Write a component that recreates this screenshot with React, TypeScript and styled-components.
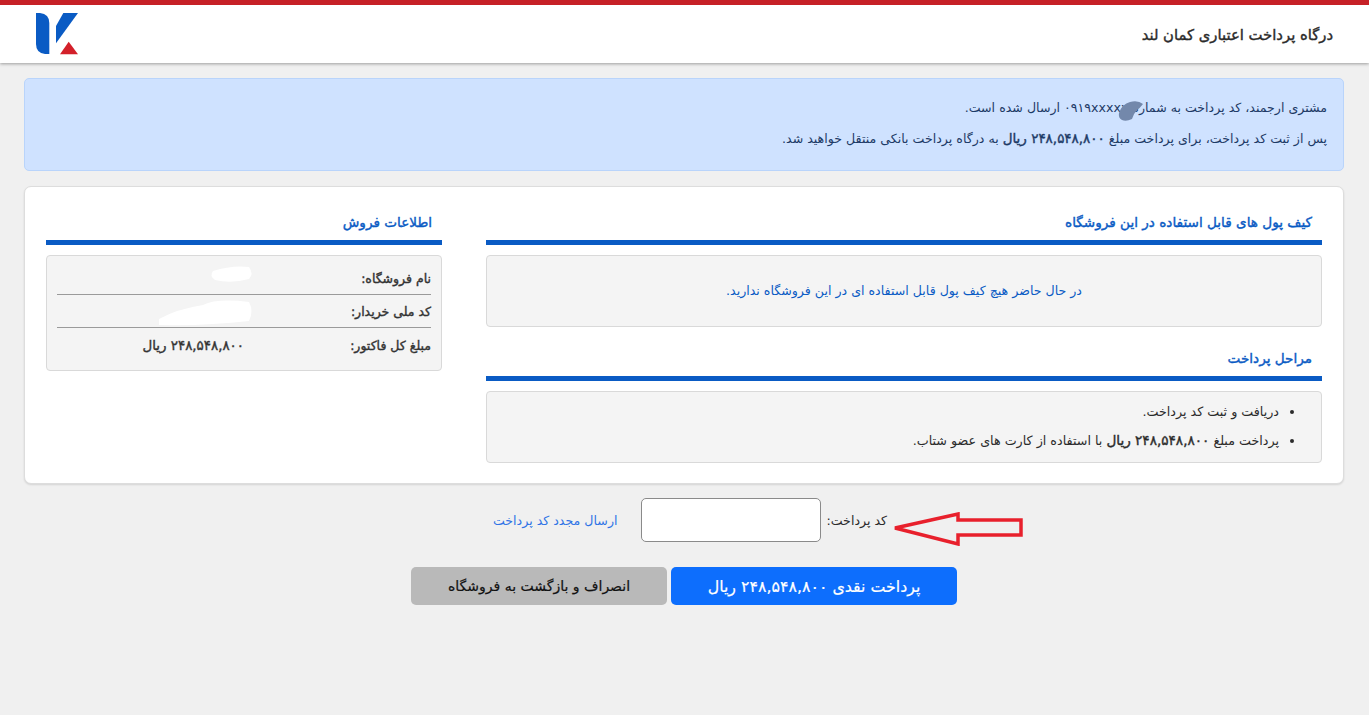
import React from "react";
import styled, { createGlobalStyle, css } from "styled-components";

const heavy = css`font-weight: 400; -webkit-text-stroke: 0.4px currentColor;`;

const Global = createGlobalStyle`
  html, body { margin: 0; padding: 0; background: #f0f0f0; }
  body { font-family: "DejaVu Sans", "Noto Sans", sans-serif; font-size: 12.6px; color: #212529; direction: rtl; overflow: hidden; }
`;
const Page = styled.div`height: 715px; display: flex; flex-direction: column;`;
const Header = styled.header`
  height: 58px; background: #fff; border-top: 5px solid #c62127; box-shadow: 0 1px 3px rgba(0,0,0,.35);
  display: flex; align-items: center; justify-content: space-between; padding: 0 36px;
`;
const Title = styled.h1`margin: 0; font-size: 14.8px; color: #2b2b2b; ${heavy}`;
const Main = styled.main`padding: 15px 25px 0 24px; display: flex; flex-direction: column;`;
const Alert = styled.div`
  height: 93px; box-sizing: border-box; background: #cfe2ff; border: 1px solid #b9d4fb; border-radius: 5px;
  padding: 14px 16px 0; color: #1d3a66; line-height: 30px;
`;
const AlertLine = styled.div`position: relative; width: fit-content;`;
const Strong = styled.b`font-size: 1.07em; ${heavy}`;
const Smudge = styled.svg`position: absolute; top: 7px; right: 182px;`;
const Card = styled.section`
  margin-top: 15px; height: 298px; box-sizing: border-box; background: #fff; border: 1px solid #ddd; border-radius: 7px;
  box-shadow: 0 1px 2px rgba(0,0,0,.12); padding: 15px 21px 0; display: flex; gap: 44px;
`;
const Col = styled.div<{ $w: number }>`width: ${p => p.$w}px; flex: none;`;
const SectionTitle = styled.h2`
  margin: 0; height: 43px; box-sizing: border-box; border-bottom: 5px solid #0a5bc4; color: #0a5bc4; font-size: 13.6px;
  padding: 5px 10px 0; line-height: 30px; ${heavy}
`;
const Well = styled.div<{ $h: number }>`
  margin-top: 10px; height: ${p => p.$h}px; box-sizing: border-box; background: #f4f4f4; border: 1px solid #d9d9d9; border-radius: 4px;
`;
const Empty = styled(Well)`display: flex; align-items: center; justify-content: center; color: #0a5bc4; padding-bottom: 2px;`;
const Second = styled.div`margin-top: 11px;`;
const Steps = styled.ul`margin: 0; padding: 5px 42px 0 0; font-size: 12.7px; line-height: 29px; color: #2b2b2b;`;
const Info = styled(Well)`padding: 6px 10px 0;`;
const InfoRow = styled.div<{ $last?: boolean }>`
  height: 33px; box-sizing: border-box; display: grid; grid-template-columns: 187px 1fr; align-items: center; position: relative; padding-top: 1px;
  border-bottom: ${p => (p.$last ? "none" : "1px solid #9a9a9a")}; font-size: 12.5px; color: #333; ${heavy}
`;
const Amount = styled.span`font-size: 13.4px;`;
const Blob = styled.svg`position: absolute; left: 100px; top: 0;`;
const CodeRow = styled.div`
  position: relative; margin-top: 14px; height: 44px; display: flex; align-items: center; justify-content: center; padding-left: 12px;
`;
const Label = styled.label`color: #2b2b2b;`;
const Input = styled.input`
  width: 180px; height: 44px; box-sizing: border-box; margin: 0 5px 0 24px; border: 1px solid #8a8a8a; border-radius: 5px; background: #fff;
`;
const Resend = styled.a`color: #2f74e6;`;
const Arrow = styled.svg`position: absolute; left: 868px; top: 14px;`;
const Buttons = styled.div`margin-top: 25px; display: flex; justify-content: center; gap: 4px;`;
const Btn = styled.button<{ $primary?: boolean }>`
  height: 38px; border: none; border-radius: 5px; font-family: inherit; padding: 0; -webkit-text-stroke: 0.2px currentColor;
  font-size: ${p => (p.$primary ? 15.8 : 14)}px;
  width: ${p => (p.$primary ? 286 : 256)}px; background: ${p => (p.$primary ? "#0d6efd" : "#b9b9b9")}; color: ${p => (p.$primary ? "#fff" : "#111")};
`;

const Logo = () => (
  <svg width="43" height="43" viewBox="0 0 43 43">
    <path d="M0 0h4q9.300 1 9.300 10V41H9Q0 40 0 31Z" fill="#0a5bc4" />
    <path d="M20 13L27.300 0H42L20 30.300Z" fill="#0a5bc4" />
    <path d="M24 41.300L32.700 28.700 42 41.300Z" fill="#d3202a" />
  </svg>
);

export default function App() {
  return (
    <Page>
      <Global />
      <Header>
        <Title>درگاه پرداخت اعتباری کمان لند</Title>
        <Logo />
      </Header>
      <Main>
        <Alert>
          <AlertLine>
            مشتری ارجمند، کد پرداخت به شماره ۰۹۱۹xxxxx ارسال شده است.
            <Smudge width="28" height="22" viewBox="0 0 28 22">
              <path d="M2 13Q5 4 13 2Q21 0 26 4Q23 8 20 10Q17 13 15 19Q9 22 5 20Q1 18 2 13Z" fill="#7388ab" />
            </Smudge>
          </AlertLine>
          <AlertLine>پس از ثبت کد پرداخت، برای پرداخت مبلغ <Strong>۲۴۸,۵۴۸,۸۰۰ ریال</Strong> به درگاه پرداخت بانکی منتقل خواهید شد.</AlertLine>
        </Alert>
        <Card>
          <Col $w={836}>
            <SectionTitle>کیف پول های قابل استفاده در این فروشگاه</SectionTitle>
            <Empty $h={72}>در حال حاضر هیچ کیف پول قابل استفاده ای در این فروشگاه ندارید.</Empty>
            <Second>
              <SectionTitle>مراحل پرداخت</SectionTitle>
              <Well $h={72}>
                <Steps>
                  <li>دریافت و ثبت کد پرداخت.</li>
                  <li>پرداخت مبلغ <Strong>۲۴۸,۵۴۸,۸۰۰ ریال</Strong> با استفاده از کارت های عضو شتاب.</li>
                </Steps>
              </Well>
            </Second>
          </Col>
          <Col $w={396}>
            <SectionTitle>اطلاعات فروش</SectionTitle>
            <Info $h={116}>
              <InfoRow>
                <span>نام فروشگاه:</span>
                <Blob width="100" height="32" viewBox="0 0 100 32"><path d="M56 9Q75 3 92 5Q97 12 92 17Q74 22 58 18Q52 14 56 9Z" fill="#fff" /></Blob>
              </InfoRow>
              <InfoRow>
                <span>کد ملی خریدار:</span>
                <Blob width="100" height="32" viewBox="0 0 100 32"><path d="M2 24Q20 14 46 10Q60 3 92 7Q97 16 92 26Q50 31 2 30Z" fill="#fff" /></Blob>
              </InfoRow>
              <InfoRow $last><span>مبلغ کل فاکتور:</span><Amount>۲۴۸,۵۴۸,۸۰۰ ریال</Amount></InfoRow>
            </Info>
          </Col>
        </Card>
        <CodeRow>
          <Label>کد پرداخت:</Label>
          <Input />
          <Resend>ارسال مجدد کد پرداخت</Resend>
          <Arrow width="132" height="34" viewBox="0 0 132 34">
            <path d="M3 16L66 2V8L129 8V23H66V32Z" fill="none" stroke="#e8202c" strokeWidth="3.500" />
          </Arrow>
        </CodeRow>
        <Buttons>
          <Btn $primary>پرداخت نقدی ۲۴۸,۵۴۸,۸۰۰ ریال</Btn>
          <Btn>انصراف و بازگشت به فروشگاه</Btn>
        </Buttons>
      </Main>
    </Page>
  );
}
